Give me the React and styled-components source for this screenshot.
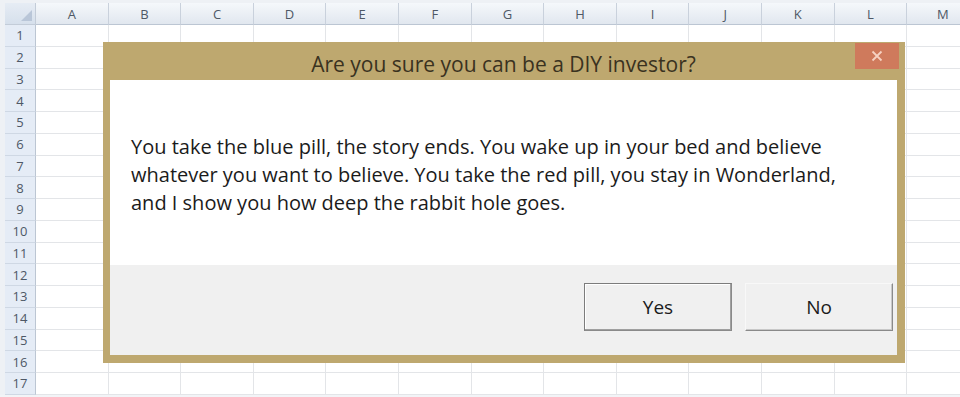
import styled, { createGlobalStyle } from "styled-components";

const GlobalStyle = createGlobalStyle`
  html, body {
    margin: 0;
    padding: 0;
    background: #ffffff;
  }
  body {
    font-family: "Open Sans", "Noto Sans", sans-serif;
  }
`;

const COLUMNS = ["A", "B", "C", "D", "E", "F", "G", "H", "I", "J", "K", "L", "M"];
const ROWS = Array.from({ length: 17 }, (_, i) => i + 1);

const Screen = styled.div`
  position: relative;
  width: 960px;
  height: 397px;
  overflow: hidden;
  background: #f2f4f7;
`;

const Sheet = styled.div`
  display: grid;
  grid-template-columns: 5px 31px repeat(13, 72.6px);
  grid-template-rows: 3px 22px repeat(17, 21.75px);
`;

const Gap = styled.div`
  grid-column: ${(p) => p.col};
  grid-row: ${(p) => p.row};
  background: #eef1f5;
`;

const Corner = styled.div`
  position: relative;
  background: linear-gradient(#e6ecf4, #d6e0ec);
  border-right: 1px solid #c3ccd8;
  border-bottom: 1px solid #c3ccd8;
  &::after {
    content: "";
    position: absolute;
    right: 3px;
    bottom: 3px;
    border-style: solid;
    border-width: 0 0 11px 11px;
    border-color: transparent transparent #b9c6d8 transparent;
  }
`;

const ColHead = styled.div`
  display: flex;
  align-items: center;
  justify-content: center;
  background: linear-gradient(#f5f8fb, #e1e7ef);
  border-right: 1px solid #c9d1dc;
  border-bottom: 1px solid #bcc6d3;
  color: #4e5866;
  font-family: "Open Sans", sans-serif;
  font-size: 13px;
`;

const RowHead = styled.div`
  display: flex;
  align-items: center;
  justify-content: center;
  background: #e5ecf6;
  border-right: 1px solid #bcc6d3;
  border-bottom: 1px solid #cfd8e4;
  color: #4e5866;
  font-family: "Open Sans", sans-serif;
  font-size: 13px;
`;

const Cell = styled.div`
  background: #ffffff;
  border-right: 1px solid #e3e5e8;
  border-bottom: 1px solid #e3e5e8;
`;

const Dialog = styled.div`
  position: absolute;
  left: 103px;
  top: 42px;
  width: 802px;
  height: 321px;
  box-sizing: border-box;
  display: flex;
  flex-direction: column;
  background: #bea86f;
  padding: 0 8px 8px 7px;
`;

const TitleBar = styled.div`
  position: relative;
  height: 38px;
  flex: none;
  display: flex;
  align-items: center;
  justify-content: center;
  padding-top: 5px;
  box-sizing: border-box;
  color: #3a321f;
  font-size: 21px;
`;

const CloseButton = styled.button`
  position: absolute;
  top: 1px;
  right: -2px;
  width: 44px;
  height: 26px;
  border: none;
  padding: 0;
  background: #cf7a5c;
  display: flex;
  align-items: center;
  justify-content: center;
  svg {
    width: 12px;
    height: 12px;
  }
`;

const Body = styled.div`
  flex: none;
  height: 185px;
  box-sizing: border-box;
  background: #ffffff;
  padding: 53px 20px 0 21px;
  color: #1b1b1b;
  font-size: 20px;
  line-height: 28px;
`;

const Footer = styled.div`
  flex: 1;
  background: #f0f0f0;
  display: flex;
  justify-content: flex-end;
  align-items: flex-start;
  gap: 13px;
  padding: 18px 4px 0 0;
`;

const Button = styled.button`
  width: 148px;
  height: 48px;
  box-sizing: border-box;
  background: #f0f0f0;
  color: #1b1b1b;
  font-family: inherit;
  font-size: 19px;
  border: 1px solid ${(p) => (p.focused ? "#7c7c7c" : "#f8f8f8")};
  border-right-color: #8a8a8a;
  border-bottom-color: #8a8a8a;
  box-shadow: ${(p) =>
    p.focused ? "inset -1px -1px 0 #a0a0a0, inset 1px 1px 0 #ffffff" : "inset -1px -1px 0 #c8c8c8"};
`;

export default function App() {
  return (
    <>
      <GlobalStyle />
      <Screen>
        <Sheet>
          <Gap col="1 / -1" row="1" />
          <Gap col="1" row="2 / -1" />
          <Corner />
          {COLUMNS.map((c) => (
            <ColHead key={c}>{c}</ColHead>
          ))}
          {ROWS.map((r) => [
            <RowHead key={`h${r}`}>{r}</RowHead>,
            ...COLUMNS.map((c) => <Cell key={`${c}${r}`} />),
          ])}
        </Sheet>

        <Dialog>
          <TitleBar>
            Are you sure you can be a DIY investor?
            <CloseButton aria-label="Close">
              <svg viewBox="0 0 12 12">
                <path d="M1.5 1.5 L10.5 10.5 M10.5 1.5 L1.5 10.5" stroke="#f6d2c2" strokeWidth="1.8" />
              </svg>
            </CloseButton>
          </TitleBar>
          <Body>
            You take the blue pill, the story ends. You wake up in your bed and believe
            <br />
            whatever you want to believe. You take the red pill, you stay in Wonderland,
            <br />
            and I show you how deep the rabbit hole goes.
          </Body>
          <Footer>
            <Button focused>Yes</Button>
            <Button>No</Button>
          </Footer>
        </Dialog>
      </Screen>
    </>
  );
}
